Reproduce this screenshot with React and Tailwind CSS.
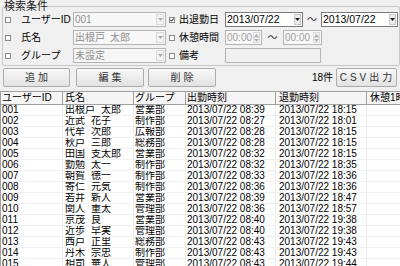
import React from "react";

const rows = [
  ["001", "出根戸", "太郎", "営業部", "08:39", "18:15"],
  ["002", "近武", "花子", "制作部", "08:27", "18:01"],
  ["003", "代牟", "次郎", "広報部", "08:28", "18:15"],
  ["004", "秋戸", "三郎", "総務部", "08:28", "18:15"],
  ["005", "田国", "支太郎", "営業部", "08:32", "18:15"],
  ["006", "勤勉", "太一", "制作部", "08:32", "18:35"],
  ["007", "朝賀", "徳一", "制作部", "08:33", "18:36"],
  ["008", "寄仁", "元気", "制作部", "08:36", "18:36"],
  ["009", "若井", "新人", "営業部", "08:39", "18:47"],
  ["010", "関人", "重太", "管理部", "08:36", "18:57"],
  ["011", "京茂", "良", "営業部", "08:40", "19:38"],
  ["012", "近歩", "早実", "管理部", "08:40", "19:38"],
  ["013", "西戸", "正里", "総務部", "08:43", "19:43"],
  ["014", "丹木", "宗忠", "制作部", "08:43", "19:43"],
  ["015", "相司", "華人", "管理部", "08:43", "19:44"],
];

function Check({ checked }) {
  return (
    <span className="w-[6px] h-[6px] border border-[#8a8a8a] bg-white flex items-center justify-center shrink-0">
      {checked && (
        <svg width="4" height="4" viewBox="0 0 4 4">
          <path d="M0.3 1.8 L1.5 3.2 L3.8 0.4" stroke="#1a1a1a" strokeWidth="1" fill="none" />
        </svg>
      )}
    </span>
  );
}

function Down({ color }) {
  return (
    <svg width="5" height="3" viewBox="0 0 5 3">
      <path d="M0 0H5L2.5 3Z" fill={color} />
    </svg>
  );
}

function Up({ color }) {
  return (
    <svg width="5" height="3" viewBox="0 0 5 3">
      <path d="M0 3H5L2.5 0Z" fill={color} />
    </svg>
  );
}

function Combo({ text, w }) {
  return (
    <div className={`${w} h-[15px] border border-[#b4b4b4] bg-[#f7f7f7] flex items-stretch`}>
      <span className="flex-1 pl-[1px] text-[10px] leading-[13px] text-[#8e8e8e] whitespace-nowrap overflow-hidden">{text}</span>
      <span className="w-[8px] my-[1px] mr-[1px] border border-[#dadada] bg-[#f3f3f3] flex items-center justify-center">
        <Down color="#a8a8a8" />
      </span>
    </div>
  );
}

function DateBox({ w }) {
  return (
    <div className={`${w} h-[15px] border border-[#7a7a7a] bg-white flex items-stretch`}>
      <span className="flex-1 pl-[1px] text-[10.5px] leading-[13px] text-black whitespace-nowrap">2013/07/22</span>
      <span className="w-[7px] my-[1px] mr-[1px] border border-[#c8c8c8] bg-[#ececec] flex items-center justify-center">
        <Down color="#202020" />
      </span>
    </div>
  );
}

function TimeBox({ w }) {
  return (
    <div className={`${w} h-[15px] border border-[#b4b4b4] bg-[#f7f7f7] flex items-stretch`}>
      <span className="flex-1 pl-[1px] text-[10px] leading-[13px] text-[#a0a0a0] whitespace-nowrap">00:00</span>
      <span className="w-[7px] my-[1px] mr-[1px] flex flex-col">
        <span className="flex-1 border border-[#dadada] bg-[#f3f3f3] flex items-center justify-center">
          <Up color="#b0b0b0" />
        </span>
        <span className="flex-1 border border-[#dadada] border-t-0 bg-[#f3f3f3] flex items-center justify-center">
          <Down color="#b0b0b0" />
        </span>
      </span>
    </div>
  );
}

function Btn({ children, w, extra = "" }) {
  return (
    <div
      className={`${w} h-[19px] border border-[#acacac] rounded-[2px] bg-gradient-to-b from-[#f8f8f8] to-[#e2e2e2] flex items-center justify-center text-[10px] leading-[12px] text-[#333] whitespace-nowrap ${extra}`}
    >
      {children}
    </div>
  );
}

const cols = "grid grid-cols-[62px_71px_52px_90px_91px_1fr]";

export default function App() {
  return (
    <div className="w-[400px] h-[266px] bg-[#f0f0f0] overflow-hidden font-['Liberation_Sans','Noto_Sans_CJK_JP',sans-serif] text-black flex flex-col">
      <fieldset className="mx-[2px] px-[1px] pb-[2px] border border-[#c8c8c8] rounded-[2px]">
        <legend className="text-[11px] leading-[12px] text-[#222] px-0">検索条件</legend>
        <div className="flex flex-col gap-[3px]">
          {/* row 1 */}
          <div className="flex items-center h-[15px]">
            <span className="ml-[1px]"><Check /></span>
            <span className="ml-[10px] w-[52px] text-[10px] leading-[12px] whitespace-nowrap">ユーザーID</span>
            <Combo text="001" w="w-[93px]" />
            <span className="ml-[3px]"><Check checked /></span>
            <span className="ml-[4px] w-[46px] text-[10px] leading-[12px] whitespace-nowrap">出退勤日</span>
            <DateBox w="w-[78px]" />
            <span className="w-[18px] text-center text-[10px] leading-[12px] text-[#333]">～</span>
            <DateBox w="w-[77px]" />
          </div>
          {/* row 2 */}
          <div className="flex items-center h-[15px]">
            <span className="ml-[1px]"><Check /></span>
            <span className="ml-[10px] w-[52px] text-[10px] leading-[12px] whitespace-nowrap">氏名</span>
            <Combo text={<><span>出根戸</span><span className="ml-[5px]">太郎</span></>} w="w-[93px]" />
            <span className="ml-[3px]"><Check /></span>
            <span className="ml-[4px] w-[46px] text-[10px] leading-[12px] whitespace-nowrap">休憩時間</span>
            <TimeBox w="w-[37px]" />
            <span className="w-[21px] text-center text-[10px] leading-[12px] text-[#333]">～</span>
            <TimeBox w="w-[39px]" />
          </div>
          {/* row 3 */}
          <div className="flex items-center h-[15px]">
            <span className="ml-[1px]"><Check /></span>
            <span className="ml-[10px] w-[52px] text-[10px] leading-[12px] whitespace-nowrap">グループ</span>
            <Combo text="未設定" w="w-[93px]" />
            <span className="ml-[3px]"><Check /></span>
            <span className="ml-[4px] w-[46px] text-[10px] leading-[12px] whitespace-nowrap">備考</span>
            <div className="w-[96px] h-[15px] border border-[#b4b4b4] bg-[#f0f0f0]" />
          </div>
        </div>
      </fieldset>

      <div className="mt-[2px] flex items-center px-[3px]">
        <Btn w="w-[67px]" extra="tracking-[3px] pl-[3px]">追加</Btn>
        <Btn w="w-[68px] ml-[6px]" extra="tracking-[3px] pl-[3px]">編集</Btn>
        <Btn w="w-[68px] ml-[4px]" extra="tracking-[3px] pl-[3px]">削除</Btn>
        <div className="flex-1" />
        <span className="text-[10px] leading-[12px] mr-[3px]">18件</span>
        <Btn w="w-[61px]" extra="tracking-[3px] pl-[2px]">CSV出力</Btn>
      </div>

      <div className="mt-[4px] flex-1 border-t border-l border-[#a0a0a0] bg-white overflow-hidden">
        <div className={`${cols} h-[13px] bg-[#f5f5f5] border-b border-[#a0a0a0] text-[10px] leading-[12px] whitespace-nowrap`}>
          <div className="border-r border-[#a0a0a0] pl-[1px] overflow-hidden">ユーザーID</div>
          <div className="border-r border-[#a0a0a0] pl-[2px] overflow-hidden">氏名</div>
          <div className="border-r border-[#a0a0a0] pl-[1px] overflow-hidden">グループ</div>
          <div className="border-r border-[#a0a0a0] pl-[1px] overflow-hidden">出勤時刻</div>
          <div className="border-r border-[#a0a0a0] pl-[3px] overflow-hidden">退勤時刻</div>
          <div className="pl-[3px] overflow-hidden">休憩1時間</div>
        </div>
        {rows.map((r) => (
          <div key={r[0]} className={`${cols} h-[11px] border-b border-[#f0f0f0] text-[10px] leading-[10px] whitespace-nowrap`}>
            <div className="border-r border-[#ececec] pl-[1px] overflow-hidden">{r[0]}</div>
            <div className="border-r border-[#ececec] pl-[2px] overflow-hidden">
              <span>{r[1]}</span>
              <span className="ml-[6px]">{r[2]}</span>
            </div>
            <div className="border-r border-[#ececec] pl-[1px] overflow-hidden">{r[3]}</div>
            <div className="border-r border-[#ececec] pl-[1px] overflow-hidden">2013/07/22 {r[4]}</div>
            <div className="border-r border-[#ececec] pl-[3px] overflow-hidden">2013/07/22 {r[5]}</div>
            <div className="overflow-hidden" />
          </div>
        ))}
      </div>
    </div>
  );
}
